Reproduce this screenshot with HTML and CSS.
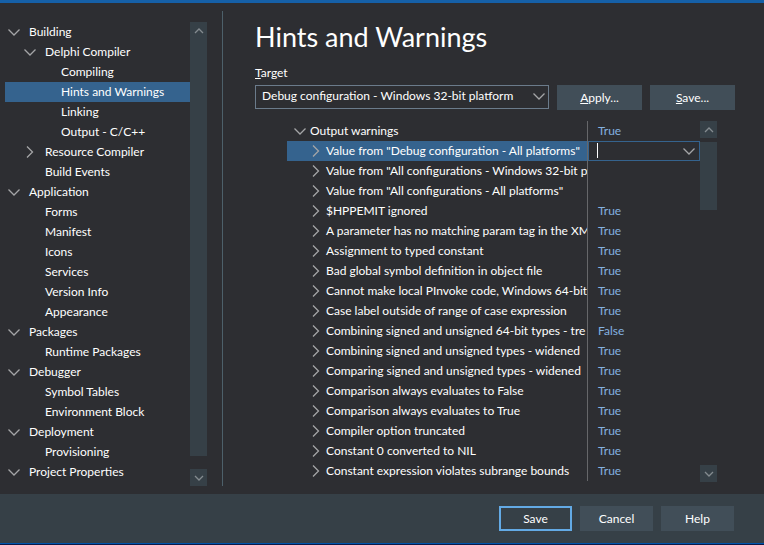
FILE: index.html
```
<!DOCTYPE html>
<html lang="en">
<head>
    <meta charset="UTF-8">
    <meta name="viewport" content="width=device-width, initial-scale=1.0">
    <title>Project Options</title>
    <link rel="stylesheet" href="styles.css">
</head>
<body>

    <!-- Shared arrows -->
    <svg class="sprite" aria-hidden="true">
        <symbol id="down" viewBox="0 0 16 16"><path d="M2.5 5.5 L8 11 L13.5 5.5"/></symbol>
        <symbol id="right" viewBox="0 0 16 16"><path d="M5 2.5 L10.5 8 L5 13.5"/></symbol>
        <symbol id="small-up" viewBox="0 0 16 16"><path d="M4 10 L8 6 L12 10"/></symbol>
        <symbol id="small-down" viewBox="0 0 16 16"><path d="M4 6 L8 10 L12 6"/></symbol>
    </svg>

    <main class="content">
        <nav class="sidebar" aria-label="Options">
            <ul class="tree">
                <li class="level1"><svg class="arrow"><use href="#down"/></svg><a href="#">Building</a></li>
                <li class="level2"><svg class="arrow"><use href="#down"/></svg><a href="#">Delphi Compiler</a></li>
                <li class="level3"><a href="#">Compiling</a></li>
                <li class="level3 selected"><a href="#" aria-current="page">Hints and Warnings</a></li>
                <li class="level3"><a href="#">Linking</a></li>
                <li class="level3"><a href="#">Output - C/C++</a></li>
                <li class="level2"><svg class="arrow"><use href="#right"/></svg><a href="#">Resource Compiler</a></li>
                <li class="level2 leaf"><a href="#">Build Events</a></li>
                <li class="level1"><svg class="arrow"><use href="#down"/></svg><a href="#">Application</a></li>
                <li class="level2 leaf"><a href="#">Forms</a></li>
                <li class="level2 leaf"><a href="#">Manifest</a></li>
                <li class="level2 leaf"><a href="#">Icons</a></li>
                <li class="level2 leaf"><a href="#">Services</a></li>
                <li class="level2 leaf"><a href="#">Version Info</a></li>
                <li class="level2 leaf"><a href="#">Appearance</a></li>
                <li class="level1"><svg class="arrow"><use href="#down"/></svg><a href="#">Packages</a></li>
                <li class="level2 leaf"><a href="#">Runtime Packages</a></li>
                <li class="level1"><svg class="arrow"><use href="#down"/></svg><a href="#">Debugger</a></li>
                <li class="level2 leaf"><a href="#">Symbol Tables</a></li>
                <li class="level2 leaf"><a href="#">Environment Block</a></li>
                <li class="level1"><svg class="arrow"><use href="#down"/></svg><a href="#">Deployment</a></li>
                <li class="level2 leaf"><a href="#">Provisioning</a></li>
                <li class="level1"><svg class="arrow"><use href="#down"/></svg><a href="#">Project Properties</a></li>
            </ul>
            <div class="scrollbar">
                <button type="button" class="scroll-button" aria-label="Scroll up"><svg class="arrow"><use href="#small-up"/></svg></button>
                <div class="track full"><div class="thumb"></div></div>
                <button type="button" class="scroll-button" aria-label="Scroll down"><svg class="arrow"><use href="#small-down"/></svg></button>
            </div>
        </nav>

        <section class="page">
            <h1>Hints and Warnings</h1>
            <label class="target-label" for="target"><u>T</u>arget</label>
            <div class="target-row">
                <div class="select-box">
                    <select id="target">
                        <option>Debug configuration - Windows 32-bit platform</option>
                    </select>
                    <svg class="arrow"><use href="#down"/></svg>
                </div>
                <button type="button" class="btn wide"><span><u>A</u>pply...</span></button>
                <button type="button" class="btn wide"><span><u>S</u>ave...</span></button>
            </div>

            <div class="grid">
                <table>
                    <colgroup><col><col class="value-col"></colgroup>
                    <tbody>
                        <tr class="group"><th scope="row"><div class="name"><svg class="arrow"><use href="#down"/></svg>Output warnings</div></th><td>True</td></tr>
                        <tr class="selected">
                            <th scope="row"><div class="name"><svg class="arrow"><use href="#right"/></svg><label for="value">Value from "Debug configuration - All platforms"</label></div></th>
                            <td class="edit">
                                <div class="editor">
                                    <input type="text" id="value">
                                    <span class="caret"></span>
                                    <svg class="arrow"><use href="#down"/></svg>
                                </div>
                            </td>
                        </tr>
                        <tr><th scope="row"><div class="name"><svg class="arrow"><use href="#right"/></svg>Value from "All configurations - Windows 32-bit p</div></th><td></td></tr>
                        <tr><th scope="row"><div class="name"><svg class="arrow"><use href="#right"/></svg>Value from "All configurations - All platforms"</div></th><td></td></tr>
                        <tr><th scope="row"><div class="name"><svg class="arrow"><use href="#right"/></svg>$HPPEMIT ignored</div></th><td>True</td></tr>
                        <tr><th scope="row"><div class="name"><svg class="arrow"><use href="#right"/></svg>A parameter has no matching param tag in the XM</div></th><td>True</td></tr>
                        <tr><th scope="row"><div class="name"><svg class="arrow"><use href="#right"/></svg>Assignment to typed constant</div></th><td>True</td></tr>
                        <tr><th scope="row"><div class="name"><svg class="arrow"><use href="#right"/></svg>Bad global symbol definition in object file</div></th><td>True</td></tr>
                        <tr><th scope="row"><div class="name"><svg class="arrow"><use href="#right"/></svg>Cannot make local PInvoke code, Windows 64-bit</div></th><td>True</td></tr>
                        <tr><th scope="row"><div class="name"><svg class="arrow"><use href="#right"/></svg>Case label outside of range of case expression</div></th><td>True</td></tr>
                        <tr><th scope="row"><div class="name"><svg class="arrow"><use href="#right"/></svg>Combining signed and unsigned 64-bit types - tre</div></th><td>False</td></tr>
                        <tr><th scope="row"><div class="name"><svg class="arrow"><use href="#right"/></svg>Combining signed and unsigned types - widened</div></th><td>True</td></tr>
                        <tr><th scope="row"><div class="name"><svg class="arrow"><use href="#right"/></svg>Comparing signed and unsigned types - widened</div></th><td>True</td></tr>
                        <tr><th scope="row"><div class="name"><svg class="arrow"><use href="#right"/></svg>Comparison always evaluates to False</div></th><td>True</td></tr>
                        <tr><th scope="row"><div class="name"><svg class="arrow"><use href="#right"/></svg>Comparison always evaluates to True</div></th><td>True</td></tr>
                        <tr><th scope="row"><div class="name"><svg class="arrow"><use href="#right"/></svg>Compiler option truncated</div></th><td>True</td></tr>
                        <tr><th scope="row"><div class="name"><svg class="arrow"><use href="#right"/></svg>Constant 0 converted to NIL</div></th><td>True</td></tr>
                        <tr><th scope="row"><div class="name"><svg class="arrow"><use href="#right"/></svg>Constant expression violates subrange bounds</div></th><td>True</td></tr>
                    </tbody>
                </table>
                <div class="scrollbar">
                    <button type="button" class="scroll-button" aria-label="Scroll up"><svg class="arrow"><use href="#small-up"/></svg></button>
                    <div class="track"><div class="thumb"></div></div>
                    <button type="button" class="scroll-button" aria-label="Scroll down"><svg class="arrow"><use href="#small-down"/></svg></button>
                </div>
            </div>
        </section>
    </main>

    <footer class="footer">
        <button type="submit" class="btn default">Save</button>
        <button type="button" class="btn">Cancel</button>
        <button type="button" class="btn">Help</button>
    </footer>

</body>
</html>
```
FILE: styles.css
```
* {
    box-sizing: border-box;
}

body {
    margin: 0;
    min-height: 100vh;
    display: flex;
    flex-direction: column;
    background: #2d2e32;
    border-top: 3px solid #1560a8;
    border-bottom: 1px solid #0a1a4a;
    color: #fff;
    font-family: Lato, "Open Sans", sans-serif;
    font-size: 12px;
    line-height: 20px;
}

button, input, select {
    font: inherit;
    color: inherit;
    margin: 0;
    padding: 0;
    border: none;
    border-radius: 0;
}

.sprite {
    display: none;
}

.arrow {
    width: 16px;
    height: 16px;
    flex: none;
    fill: none;
    stroke: #a4a5a7;
    stroke-width: 1.3;
}

.content {
    flex: 1;
    display: flex;
    padding: 8px 0;
}

/* Options tree */
.sidebar {
    flex: none;
    display: flex;
    padding: 11px 15px 0 5px;
    border-right: 1px solid #4d606a;
}

.tree {
    width: 185px;
    margin: 0;
    padding: 0;
    list-style: none;
}

.tree li {
    display: flex;
    align-items: center;
    gap: 7px;
    height: 20px;
    padding-left: 1px;
    white-space: nowrap;
}

.tree .level2 {
    padding-left: 17px;
}

.tree .leaf {
    padding-left: 40px;
}

.tree .level3 {
    padding-left: 56px;
}

.tree a {
    color: inherit;
    text-decoration: none;
}

.selected {
    background: #35638e;
}

/* Scrollbars */
.scrollbar {
    flex: none;
    width: 17px;
    display: flex;
    flex-direction: column;
}

.scroll-button {
    display: flex;
    align-items: center;
    justify-content: center;
    height: 17px;
    background: #364047;
}

.scroll-button .arrow {
    stroke: #848b90;
}

.track {
    flex: 1;
    padding-top: 4px;
}

.track.full {
    padding-top: 0;
}

.thumb {
    height: 21%;
    background: #364047;
}

.full .thumb {
    height: 97%;
}

/* Options page */
.page {
    flex: 1;
    min-width: 0;
    display: flex;
    flex-direction: column;
    padding: 8px 29px 4px 32px;
}

h1 {
    margin: 0 0 8px;
    font-size: 27px;
    font-weight: normal;
    line-height: 36px;
}

.target-label {
    margin-bottom: 2px;
}

.target-row {
    display: flex;
    gap: 8px;
    margin-bottom: 11px;
}

.select-box {
    flex: 1;
    display: flex;
    position: relative;
}

.select-box select {
    width: 100%;
    height: 24px;
    padding: 0 28px 2px 6px;
    appearance: none;
    background: transparent;
    border: 1px solid #6b7b8b;
}

.select-box .arrow {
    position: absolute;
    right: 2px;
    top: 3px;
    pointer-events: none;
}

.btn {
    width: 73px;
    height: 25px;
    background: #414e58;
}

.btn.wide {
    width: 85px;
}

.btn.default {
    background: #364047;
    border: 2px solid #63aae5;
}

/* Warnings grid */
.grid {
    flex: 1;
    display: flex;
    align-items: stretch;
    margin: 0 18px 0 32px;
}

.grid table {
    flex: 1;
    width: 0;
    align-self: flex-start;
    table-layout: fixed;
    border-spacing: 0;
}

.value-col {
    width: 113px;
}

th, td {
    height: 20px;
    padding: 0;
    font-weight: normal;
    text-align: left;
}

td {
    padding-left: 10px;
    border-left: 1px solid #66676a;
    background: #2d2e32;
    color: #83b1e0;
}

td.edit {
    padding: 0;
}

.name {
    display: flex;
    align-items: center;
    gap: 2px;
    height: 20px;
    padding-left: 21px;
    overflow: hidden;
    white-space: nowrap;
}

.group .name {
    padding-left: 5px;
}

.editor {
    position: relative;
    display: flex;
    align-items: center;
    height: 20px;
    padding-right: 2px;
    border: 1px solid #35638e;
}

.editor input {
    flex: 1;
    min-width: 0;
    height: 18px;
    padding: 0 8px;
    background: transparent;
    outline: none;
}

.caret {
    position: absolute;
    left: 8px;
    top: 1px;
    width: 1px;
    height: 15px;
    background: #fff;
}

/* Dialog buttons */
.footer {
    display: flex;
    justify-content: flex-end;
    gap: 8px;
    padding: 12px 30px;
    background: #364047;
    border-bottom: 1px solid #0055ad;
}
```
